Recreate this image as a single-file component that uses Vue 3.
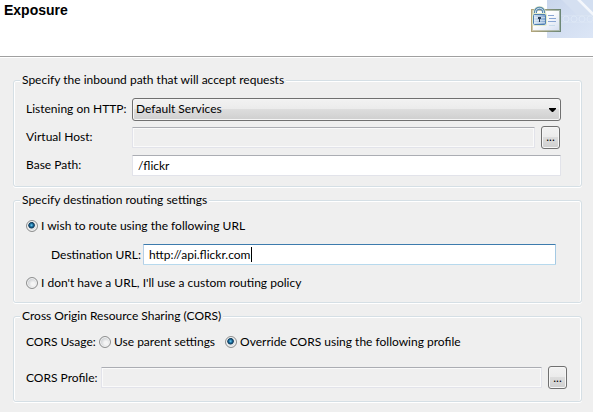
<script setup>
import { ref } from 'vue'

const listener = ref('default')
const virtualHost = ref('')
const basePath = ref('/flickr')
const routing = ref('url')
const destination = ref('http://api.flickr.com')
const corsUsage = ref('override')
const corsProfile = ref('')
</script>

<template>
  <div class="wizard">
    <header class="banner">
      <h1>Exposure</h1>
      <svg class="art" width="62" height="38" viewBox="0 0 62 38" aria-hidden="true">
        <defs>
          <linearGradient id="sky" x1="0" y1="0" x2="1" y2="1">
            <stop offset="0" stop-color="#c9d6ec" />
            <stop offset="1" stop-color="#dce6f6" />
          </linearGradient>
          <linearGradient id="card" x1="0" y1="0" x2="1" y2="1">
            <stop offset="0.4" stop-color="#ffffff" />
            <stop offset="1" stop-color="#d3ddf0" />
          </linearGradient>
          <linearGradient id="edge" x1="0" y1="0" x2="1" y2="0">
            <stop offset="0" stop-color="#b3a67c" />
            <stop offset="1" stop-color="#6d8776" />
          </linearGradient>
          <linearGradient id="lock" x1="0" y1="0" x2="1" y2="0">
            <stop offset="0" stop-color="#dbe8f5" />
            <stop offset="1" stop-color="#7da3cd" />
          </linearGradient>
        </defs>
        <rect x="16" width="46" height="38" fill="url(#sky)" />
        <path d="M31 0H46L62 15V18H49Z" fill="#d5e0f1" />
        <path d="M46 0H50L62 12V16Z" fill="#f4f7fc" />
        <path d="M50 0H62V12Z" fill="#d3dff1" />
        <g fill="none" stroke="#dfe8f6" stroke-opacity="0.8">
          <path d="M30 15.5H62M30 22.5H62" stroke-opacity="0.4" />
          <circle cx="35" cy="19" r="3" />
          <circle cx="43" cy="19" r="3" />
          <circle cx="51" cy="19" r="3" />
          <circle cx="59" cy="19" r="3" />
        </g>
        <g>
          <rect x="1" y="10" width="28" height="21" fill="url(#card)" stroke="url(#edge)" stroke-width="2" />
          <rect x="1.5" y="10.5" width="27" height="20" fill="none" stroke="#fff" stroke-opacity="0.4" />
          <path d="M17 15.5H23M18 18.5H25M17 21.5H25" stroke="#88a5d3" />
          <path d="M18 25.5H24" stroke="#c9dceb" />
          <path d="M3.500 16V13C3.500 5.500 13.500 5.500 13.500 13V16" fill="none" stroke="#dfe8c8" stroke-width="3" />
          <path d="M4.500 15V12C4.500 7 12.500 7 12.500 12V15" fill="none" stroke="#5687ab" stroke-width="3" />
          <path d="M4.500 15V12C4.500 7 12.500 7 12.500 12V15" fill="none" stroke="#cfe2ee" stroke-width="1" />
          <rect x="1.500" y="13.500" width="14" height="12" rx="1" fill="none" stroke="#e3ebcb" />
          <rect x="2.500" y="14.500" width="12" height="10" rx="1" fill="url(#lock)" stroke="#4f7fb0" />
          <path d="M3 17.500H14M3 20.500H14M3 22.500H14" stroke="#eef5fb" stroke-opacity="0.5" />
          <path d="M7 17H10V19H9V22H8V19H7Z" fill="#2b3c55" />
        </g>
      </svg>
    </header>

    <main>
      <fieldset>
        <legend>Specify the inbound path that will accept requests</legend>
        <div class="grid">
          <label for="listener">Listening on HTTP:</label>
          <div class="combo">
            <select id="listener" v-model="listener">
              <option value="default">Default Services</option>
            </select>
            <svg class="arrow" width="7" height="4" viewBox="0 0 7 4" aria-hidden="true">
              <path d="M0 0H7V1L4 4H3L0 1Z" />
            </svg>
          </div>
          <label for="vhost">Virtual Host:</label>
          <div class="pick">
            <input id="vhost" v-model="virtualHost" type="text" readonly />
            <button type="button" aria-label="Browse virtual hosts">...</button>
          </div>
          <label for="base">Base Path:</label>
          <input id="base" v-model="basePath" type="text" />
        </div>
      </fieldset>

      <fieldset>
        <legend>Specify destination routing settings</legend>
        <div class="stack">
          <label class="radio">
            <input v-model="routing" type="radio" name="routing" value="url" />
            I wish to route using the following URL
          </label>
          <div class="destination">
            <label for="dest">Destination URL:</label>
            <div class="active">
              <input id="dest" v-model="destination" type="text" />
              <span class="caret"></span>
            </div>
          </div>
          <label class="radio">
            <input v-model="routing" type="radio" name="routing" value="policy" />
            I don't have a URL, I'll use a custom routing policy
          </label>
        </div>
      </fieldset>

      <fieldset>
        <legend>Cross Origin Resource Sharing (CORS)</legend>
        <div class="cors">
          <div class="usage" role="radiogroup" aria-labelledby="usage">
            <span id="usage" class="name">CORS Usage:</span>
            <label class="radio">
              <input v-model="corsUsage" type="radio" name="cors" value="parent" />
              Use parent settings
            </label>
            <label class="radio">
              <input v-model="corsUsage" type="radio" name="cors" value="override" />
              Override CORS using the following profile
            </label>
          </div>
          <div class="profile">
            <label class="name" for="profile">CORS Profile:</label>
            <div class="pick">
              <input id="profile" v-model="corsProfile" type="text" readonly />
              <button type="button" aria-label="Browse CORS profiles">...</button>
            </div>
          </div>
        </div>
      </fieldset>
    </main>
  </div>
</template>

<style>
body {
  background: #efefef;
}
</style>

<style scoped>
.wizard {
  color: #000;
  font: 12px/16px Lato, "Noto Sans", sans-serif;
}
.banner {
  display: flex;
  justify-content: space-between;
  height: 56px;
  background: #fff;
  border-bottom: 1px solid #a0a0a0;
  box-shadow: 0 1px #fff;
}
h1 {
  margin: 0;
  padding: 2px 4px;
  font: bold 14px/16px "Liberation Sans", Arial, sans-serif;
}
main {
  display: flex;
  flex-direction: column;
  gap: 5px;
  padding: 15px 11px 10px 13px;
}
fieldset {
  min-width: 0;
  margin: 0;
  padding: 0;
  border: 1px solid #d5dfe5;
  border-radius: 3px;
  box-shadow: inset 0 1px #fff, inset -1px 0 #fff, inset 1px 0 #fff, 0 1px #fff;
}
legend {
  margin-left: 6px;
  padding: 0 2px;
  background: #efefef;
}
label,
.name {
  white-space: nowrap;
}
.grid {
  display: grid;
  grid-template-columns: 106px 1fr;
  grid-auto-rows: 24px;
  row-gap: 4px;
  align-items: center;
  padding: 9px 20px 9px 12px;
}
input[type="text"] {
  box-sizing: border-box;
  width: 100%;
  min-width: 0;
  height: 21px;
  padding: 0 5px;
  border: 1px solid #e2e3ea;
  border-top-color: #abadb3;
  border-radius: 1px;
  background: #fff;
  color: #000;
  font: inherit;
  outline: none;
}
input[readonly] {
  background: #efefef;
  box-shadow: inset 0 0 0 1px #fafafa;
}
.combo,
.active {
  position: relative;
  display: flex;
}
select {
  appearance: none;
  width: 100%;
  height: 23px;
  padding: 0 20px 0 3px;
  border: 1px solid #707070;
  border-radius: 3px;
  background: linear-gradient(#f2f2f2, #ebebeb 49%, #dddddd 50%, #cfcfcf);
  box-shadow: inset 0 0 0 1px #f6f6f6;
  color: #000;
  font: inherit;
}
.arrow {
  position: absolute;
  top: 10px;
  right: 5px;
}
.pick {
  display: flex;
  flex: 1;
  align-items: center;
  gap: 6px;
  padding-right: 1px;
}
button {
  flex: none;
  width: 19px;
  height: 23px;
  padding: 0;
  border: 1px solid #707070;
  border-radius: 3px;
  background: linear-gradient(#f2f2f2, #ebebeb 49%, #dddddd 50%, #cfcfcf);
  box-shadow: inset 0 0 0 1px #f6f6f6;
  color: #000;
  font: inherit;
}
.stack {
  display: flex;
  flex-direction: column;
  align-items: flex-start;
  gap: 4px;
  padding: 6px 25px 7px 12px;
}
.radio {
  display: flex;
  align-items: center;
  gap: 3px;
  height: 24px;
}
input[type="radio"] {
  appearance: none;
  box-sizing: border-box;
  flex: none;
  width: 12px;
  height: 12px;
  margin: 0;
  border: 1px solid #8e8f8f;
  border-radius: 50%;
  background: radial-gradient(circle at 60% 60%, #f4f4f4 20%, #c4c8cc 75%);
  box-shadow: inset 0 0 0 1px #f4f4f4;
}
input[type="radio"]:checked {
  background: radial-gradient(circle at 45% 42%, #6fd0f5 0, #1b6e9f 20%, #0b3555 36%, #e4e8ea 46%, #d4d8db 70%);
}
.destination {
  display: flex;
  align-self: stretch;
  align-items: center;
  height: 25px;
  padding-left: 25px;
}
.destination label {
  width: 92px;
}
.active {
  flex: 1;
}
.active input[type="text"] {
  border-color: #3d7bad #a4c9e3 #b7d9ed #b5cfe7;
}
.caret {
  position: absolute;
  top: 3px;
  left: 108px;
  width: 1px;
  height: 15px;
  background: #000;
}
.cors {
  display: flex;
  flex-direction: column;
  gap: 11px;
  padding: 6px 13px 11px 12px;
}
.usage {
  display: flex;
  gap: 10px;
  align-items: center;
}
.usage .name {
  width: 63px;
}
.profile {
  display: flex;
  align-items: center;
  height: 25px;
}
.profile .name {
  width: 75px;
}
</style>
